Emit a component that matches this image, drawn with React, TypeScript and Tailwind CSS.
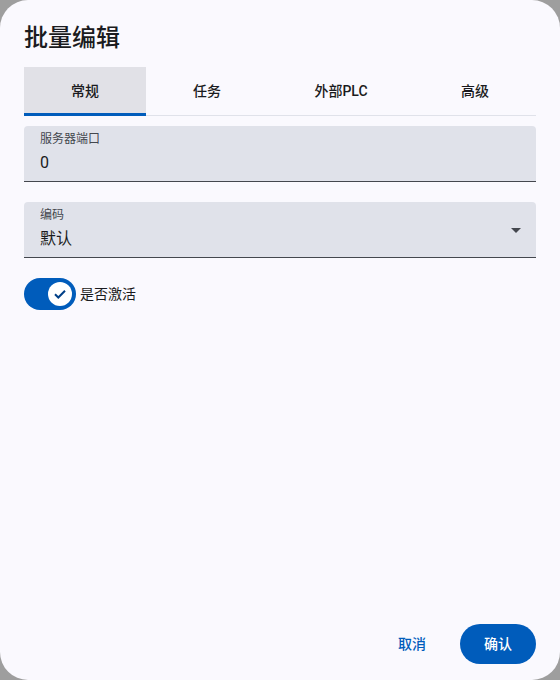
import React from "react";

export default function App() {
  const font = { fontFamily: 'Roboto, "Noto Sans CJK SC", sans-serif' };
  return (
    <div className="w-[560px] h-[680px] bg-[#9e9e9e]" style={font}>
      <div className="w-[560px] h-[680px] bg-[#faf9fe] rounded-[28px] flex flex-col text-[#1a1b20]">
        <div className="px-6 pt-[22px] text-[24px] leading-[32px] font-medium h-[67px]">批量编辑</div>
        <div className="mx-6 flex border-b border-[#e0e2ea] h-[49px]">
          <div className="w-[122px] h-[48px] bg-[#e1e1e7] flex items-center justify-center text-[14px] font-medium relative">
            常规
            <div className="absolute left-0 right-0 bottom-[-1px] h-[3px] bg-[#005cbb]" />
          </div>
          <div className="w-[122px] h-[48px] flex items-center justify-center text-[14px] font-medium">任务</div>
          <div className="w-[146px] h-[48px] flex items-center justify-center text-[14px] font-medium">外部PLC</div>
          <div className="w-[122px] h-[48px] flex items-center justify-center text-[14px] font-medium">高级</div>
        </div>
        <div className="mx-6 mt-[10px] h-[56px] bg-[#e0e2ea] rounded-t-[4px] border-b border-[#44474e] px-4 pt-[5px]">
          <div className="text-[12px] leading-[16px] text-[#44474e]">服务器端口</div>
          <div className="text-[16px] leading-[24px] mt-[4px]">0</div>
        </div>
        <div className="mx-6 mt-[20px] h-[56px] bg-[#e0e2ea] rounded-t-[4px] border-b border-[#44474e] px-4 pt-[5px] flex">
          <div className="flex-1">
            <div className="text-[12px] leading-[16px] text-[#44474e]">编码</div>
            <div className="text-[16px] leading-[24px] mt-[4px]">默认</div>
          </div>
          <div className="flex items-center pb-[4px]">
            <svg width="10" height="5" viewBox="0 0 10 5" className="mr-[-1px]">
              <path d="M0 0 L5 5 L10 0 Z" fill="#44474e" />
            </svg>
          </div>
        </div>
        <div className="mx-6 mt-[20px] flex items-center gap-1">
          <div className="w-[52px] h-[32px] rounded-full bg-[#005cbb] flex items-center justify-end pr-[4px]">
            <div className="w-[24px] h-[24px] rounded-full bg-white flex items-center justify-center">
              <svg width="16" height="16" viewBox="0 0 16 16">
                <path d="M3 8.3 L6.3 11.5 L13 4.8" fill="none" stroke="#003f87" strokeWidth="2" />
              </svg>
            </div>
          </div>
          <span className="text-[14px] leading-[20px]">是否激活</span>
        </div>
        <div className="flex-1" />
        <div className="flex justify-end items-center px-6 pb-4 gap-[10px]">
          <button className="h-[40px] px-6 text-[14px] font-medium text-[#005cbb]">取消</button>
          <button className="h-[40px] w-[76px] rounded-full bg-[#005cbb] text-white text-[14px] font-medium">确认</button>
        </div>
      </div>
    </div>
  );
}
